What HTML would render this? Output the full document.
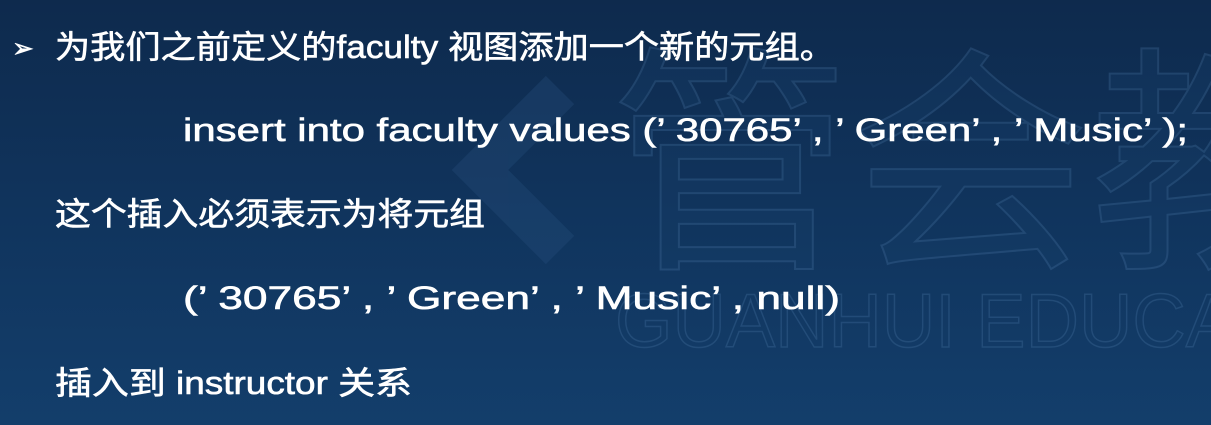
<!DOCTYPE html>
<html><head><meta charset="utf-8"><style>
html,body{margin:0;padding:0;width:1211px;height:425px;overflow:hidden;background:linear-gradient(180deg,#0e2a4d 0%,#10345d 50%,#133e6b 100%);}
svg{position:absolute;left:0;top:0}
</style></head><body>
<svg width="1211" height="425" xmlns="http://www.w3.org/2000/svg">
<g fill="none" opacity="0.3">
<text x="610" y="250" font-family="Noto Sans CJK SC, sans-serif" font-size="240" stroke="#4a77a6" stroke-width="2" fill="#17406b">管会教</text>
<text x="615" y="347" font-family="Liberation Sans, sans-serif" font-size="76" stroke="#4a77a6" stroke-width="1.5" textLength="620" lengthAdjust="spacingAndGlyphs">GUANHUI EDUCA</text>
<path d="M560 90 L480 170 L560 250" stroke-width="40" stroke="#2a5382"/>
</g>
<g fill="#ffffff" stroke="#ffffff" stroke-width="0.6" font-family="Liberation Sans, Noto Sans CJK SC, sans-serif" font-size="32">
<text x="12" y="57" font-size="26">➢</text>
<text x="55" y="58" textLength="780" lengthAdjust="spacingAndGlyphs">为我们之前定义的faculty 视图添加一个新的元组。</text>
<text x="183" y="141" textLength="1005" lengthAdjust="spacingAndGlyphs">insert into faculty values (’ 30765’ , ’ Green’ , ’ Music’ );</text>
<text x="55" y="225" textLength="430" lengthAdjust="spacingAndGlyphs">这个插入必须表示为将元组</text>
<text x="183" y="309" textLength="657" lengthAdjust="spacingAndGlyphs">(’ 30765’ , ’ Green’ , ’ Music’ , null)</text>
<text x="55" y="394" textLength="357" lengthAdjust="spacingAndGlyphs">插入到 instructor 关系</text>
</g>
</svg>
</body></html>
